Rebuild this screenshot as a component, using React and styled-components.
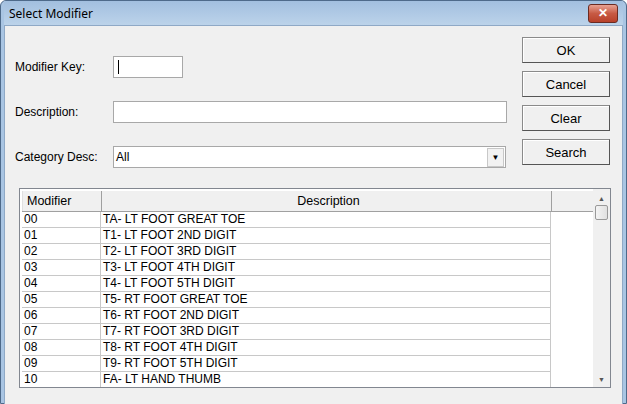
import React from "react";
import styled, { createGlobalStyle } from "styled-components";

const Global = createGlobalStyle`
  html, body { margin: 0; padding: 0; }
  body { font-family: "Liberation Sans", Arial, sans-serif; font-size: 12px; color: #000; }
`;

const Frame = styled.div`
  width: 627px;
  height: 404px;
  box-sizing: border-box;
  background: #a9c5e3;
  border: 1px solid #4e6a8a;
  border-radius: 6px 6px 0 0;
  display: flex;
  flex-direction: column;
  padding: 0 3px 3px 3px;
`;

const TitleBar = styled.div`
  height: 24px;
  flex: none;
  display: flex;
  align-items: center;
  justify-content: space-between;
  padding: 0 5px 0 5px;
  background: linear-gradient(#a2bfdf, #bcd3ea);
`;

const Title = styled.span`
  font-family: "Noto Sans", sans-serif;
  font-size: 12px;
`;

const Close = styled.div`
  width: 28px;
  height: 17px;
  border: 1px solid #6b2b22;
  border-radius: 3px;
  background: linear-gradient(#e8a293, #c75a44 50%, #b8412a);
  display: flex;
  align-items: center;
  justify-content: center;
  color: #fff;
  font-weight: bold;
  font-size: 12px;
`;

const Client = styled.div`
  flex: 1;
  background: #f0f0f0;
  border: 1px solid #8fa9c6;
  padding: 11px 12px 16px 10px;
  display: flex;
  flex-direction: column;
  gap: 20px;
`;

const Top = styled.div`
  display: flex;
  justify-content: space-between;
`;

const Fields = styled.div`
  display: flex;
  flex-direction: column;
  gap: 23px;
  padding-top: 19px;
`;

const Row = styled.div`
  display: flex;
  align-items: center;
`;

const Label = styled.div`
  width: 98px;
`;

const Input = styled.div`
  width: ${p => p.w}px;
  height: 22px;
  box-sizing: border-box;
  background: #fff;
  border: 1px solid #a8a8a8;
  display: flex;
  align-items: center;
  padding-left: 4px;
`;

const Caret = styled.span`
  width: 1px;
  height: 14px;
  background: #000;
`;

const Select = styled(Input)`
  justify-content: space-between;
  padding: 0 1px 0 2px;
`;

const DropBtn = styled.div`
  width: 15px;
  height: 17px;
  border: 1px solid #c8c8c8;
  background: #f2f2f2;
  display: flex;
  align-items: center;
  justify-content: center;
  font-size: 8px;
`;

const Buttons = styled.div`
  display: flex;
  flex-direction: column;
  gap: 8px;
`;

const Button = styled.div`
  width: 88px;
  height: 26px;
  box-sizing: border-box;
  border: 1px solid #8a8a8a;
  border-right-color: #555;
  border-bottom-color: #555;
  box-shadow: inset 1px 1px 0 #fff;
  background: #f0f0f0;
  display: flex;
  align-items: center;
  justify-content: center;
  font-size: 13px;
`;

const List = styled.div`
  margin-left: 4px;
  width: 592px;
  height: 200px;
  box-sizing: border-box;
  border: 1px solid #828790;
  background: #fff;
  display: flex;
`;

const Grid = styled.div`
  flex: 1;
  padding: 2px 0 0 2px;
  overflow: hidden;
`;

const Header = styled.div`
  display: flex;
  height: 20px;
  border-bottom: 1px solid #a0a0a0;
  background: #f0f0f0;
`;

const HCell = styled.div`
  width: ${p => p.w}px;
  flex: none;
  box-sizing: border-box;
  border-left: 1px solid ${p => (p.first ? "#e0e0e0" : "#a0a0a0")};
  display: flex;
  align-items: center;
  justify-content: ${p => (p.center ? "center" : "flex-start")};
  padding-left: 4px;
  font-size: 12.5px;
`;

const DataRow = styled.div`
  display: flex;
  height: 16px;
`;

const Cell = styled.div`
  width: ${p => p.w}px;
  flex: none;
  box-sizing: border-box;
  border-right: 1px solid #c8c8c8;
  border-bottom: 1px solid #c8c8c8;
  padding-left: 2px;
  line-height: 15px;
  font-size: 12px;
`;

const Scroll = styled.div`
  width: 17px;
  flex: none;
  background: #f0f0f0;
  display: flex;
  flex-direction: column;
  align-items: center;
  font-size: 7px;
  color: #555;
`;

const Thumb = styled.div`
  width: 13px;
  height: 15px;
  box-sizing: border-box;
  border: 1px solid #999;
  border-radius: 2px;
  background: linear-gradient(90deg, #f4f4f4, #e0e0e0);
  margin-top: 3px;
`;

const Arrow = styled.div`
  margin: ${p => (p.down ? "0 0 4px" : "6px 0 0")};
`;

const Spacer = styled.div`
  flex: 1;
`;

const rows = [
  ["00", "TA- LT FOOT GREAT TOE"],
  ["01", "T1- LT FOOT 2ND DIGIT"],
  ["02", "T2- LT FOOT 3RD DIGIT"],
  ["03", "T3- LT FOOT 4TH DIGIT"],
  ["04", "T4- LT FOOT 5TH DIGIT"],
  ["05", "T5- RT FOOT GREAT TOE"],
  ["06", "T6- RT FOOT 2ND DIGIT"],
  ["07", "T7- RT FOOT 3RD DIGIT"],
  ["08", "T8- RT FOOT 4TH DIGIT"],
  ["09", "T9- RT FOOT 5TH DIGIT"],
  ["10", "FA- LT HAND THUMB"],
];

export default function App() {
  return (
    <>
      <Global />
      <Frame>
        <TitleBar>
          <Title>Select Modifier</Title>
          <Close>✕</Close>
        </TitleBar>
        <Client>
          <Top>
            <Fields>
              <Row>
                <Label>Modifier Key:</Label>
                <Input w={70}><Caret /></Input>
              </Row>
              <Row>
                <Label>Description:</Label>
                <Input w={394} />
              </Row>
              <Row>
                <Label>Category Desc:</Label>
                <Select w={393}>
                  <span>All</span>
                  <DropBtn>▼</DropBtn>
                </Select>
              </Row>
            </Fields>
            <Buttons>
              <Button>OK</Button>
              <Button>Cancel</Button>
              <Button>Clear</Button>
              <Button>Search</Button>
            </Buttons>
          </Top>
          <List>
            <Grid>
              <Header>
                <HCell w={79} first>Modifier</HCell>
                <HCell w={450} center>Description</HCell>
                <HCell w={44} />
              </Header>
              {rows.map(([m, d]) => (
                <DataRow key={m}>
                  <Cell w={79}>{m}</Cell>
                  <Cell w={450}>{d}</Cell>
                </DataRow>
              ))}
            </Grid>
            <Scroll>
              <Arrow>▲</Arrow>
              <Thumb />
              <Spacer />
              <Arrow down>▼</Arrow>
            </Scroll>
          </List>
        </Client>
      </Frame>
    </>
  );
}
